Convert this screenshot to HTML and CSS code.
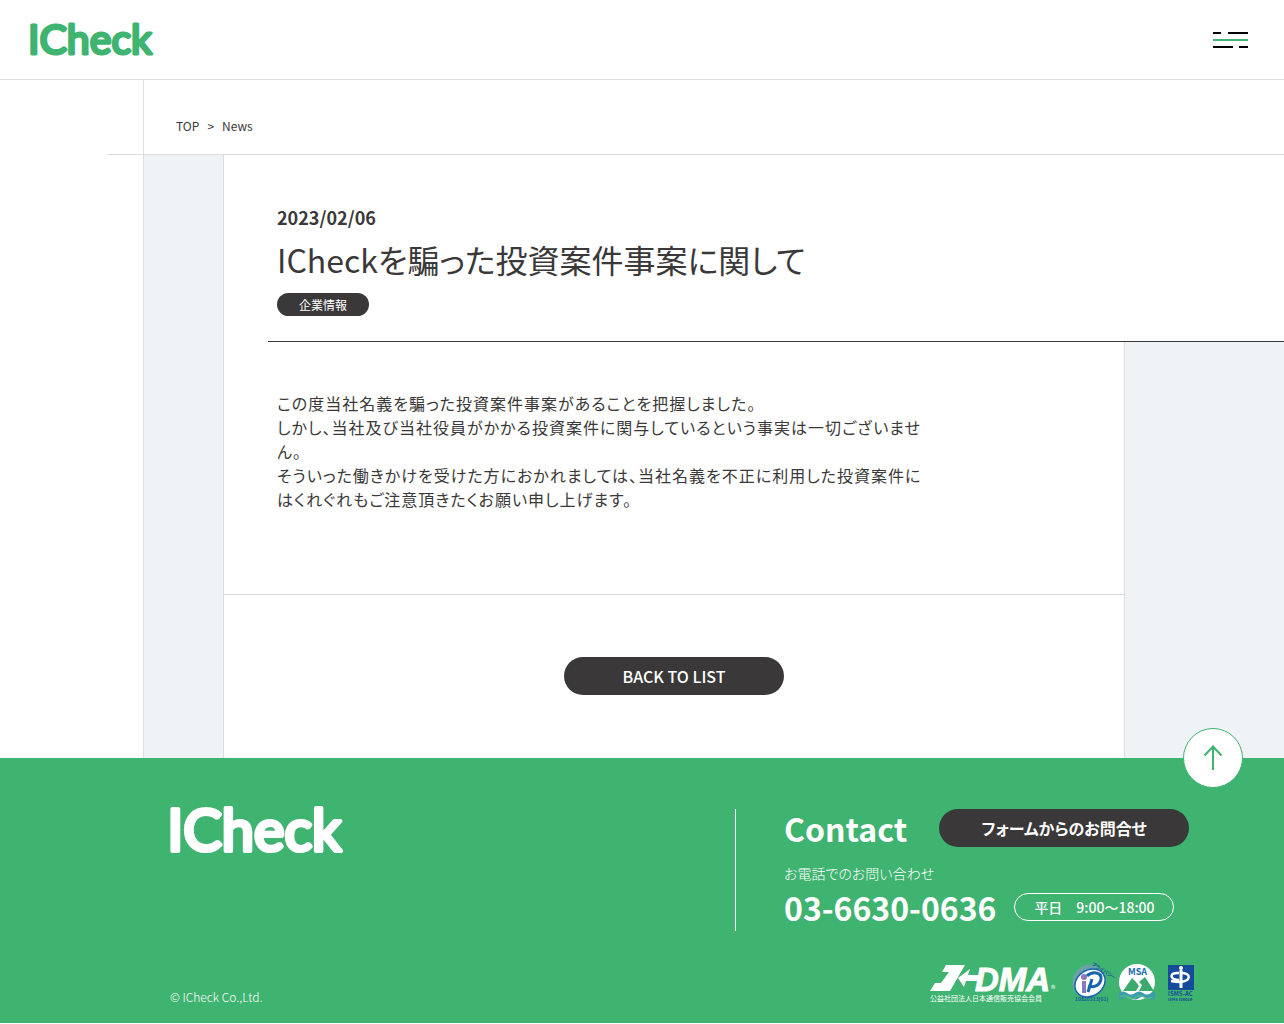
FILE: index.html
```html
<!DOCTYPE html>
<html lang="ja">
<head>
<meta charset="utf-8">
<meta name="viewport" content="width=device-width, initial-scale=1">
<title>ICheckを騙った投資案件事案に関して | ICheck</title>
<link rel="stylesheet" href="styles.css">
</head>
<body>
<header class="site-header">
  <a class="logo" href="#" aria-label="ICheck">
    <svg viewBox="0 0 128 34" aria-hidden="true"><text class="wordmark" x="-2" y="31">ICheck</text></svg>
  </a>
  <button class="menu-button" type="button" aria-label="メニュー">
    <svg viewBox="0 0 35 16" aria-hidden="true">
      <path d="M0 1h8M15 1h20M0 15h20M26 15h9" stroke="#000" stroke-width="2"/>
      <path d="M0 8h35" stroke="#3fb370" stroke-width="2"/>
    </svg>
  </button>
</header>

<main>
  <nav class="breadcrumb" aria-label="breadcrumb">
    <div class="breadcrumb-inner"><a href="#">TOP</a><span>&gt;</span><a href="#">News</a></div>
  </nav>
  <div class="backdrop">
    <article class="article">
      <header class="article-header">
        <div class="article-heading">
          <time class="date" datetime="2023-02-06">2023/02/06</time>
          <h1>ICheckを騙った投資案件事案に関して</h1>
          <span class="tag">企業情報</span>
        </div>
      </header>
      <div class="article-main">
        <div class="article-body">
          <p>この度当社名義を騙った投資案件事案があることを把握しました。<br>しかし、当社及び当社役員がかかる投資案件に関与しているという事実は一切ございません。<br>そういった働きかけを受けた方におかれましては、当社名義を不正に利用した投資案件にはくれぐれもご注意頂きたくお願い申し上げます。</p>
        </div>
        <div class="article-back"><a class="pill back" href="#">BACK TO LIST</a></div>
      </div>
    </article>
  </div>
</main>

<footer class="site-footer">
  <a class="page-top" href="#" aria-label="ページの先頭へ">
    <svg viewBox="0 0 20 26" aria-hidden="true"><path d="M10 25V2M1.500 10.500L10 1.500l8.500 9" fill="none" stroke="#3fb370" stroke-width="2"/></svg>
  </a>
  <div class="footer-top">
    <a class="footer-logo" href="#" aria-label="ICheck">
      <svg viewBox="0 0 128 34" aria-hidden="true"><text class="wordmark white" x="-2" y="30">ICheck</text></svg>
    </a>
    <section class="contact">
      <div class="contact-row">
        <h2>Contact</h2>
        <a class="pill form-link" href="#">フォームからのお問合せ</a>
      </div>
      <p class="phone-label">お電話でのお問い合わせ</p>
      <div class="phone-row">
        <a class="phone" href="tel:0366300636">03-6630-0636</a>
        <span class="hours">平日　9:00〜18:00</span>
      </div>
    </section>
  </div>
  <div class="footer-bottom">
    <small>© ICheck Co.,Ltd.</small>
    <div class="marks">
      <svg class="jadma" viewBox="0 0 130 42" role="img" aria-label="JADMA">
        <g fill="#fff">
          <path d="M18 4H37L22 30H2L7 22H13L21 11H14z"/>
          <path d="M30 17L42 8L40 14H53L50 20H38L36 26z"/>
          <text class="jadma-name" x="47" y="30">DMA</text>
          <text class="jadma-caption" x="2" y="40">公益社団法人日本通信販売協会会員</text>
          <text class="jadma-r" x="123" y="31">®</text>
        </g>
      </svg>
      <svg class="pmark" viewBox="0 0 38 42" role="img" aria-label="プライバシーマーク">
        <ellipse cx="16" cy="20" rx="15" ry="17" transform="rotate(35 16 20)" fill="#6aa3a7"/>
        <ellipse cx="18" cy="22" rx="16" ry="13" transform="rotate(-35 18 22)" fill="#fff" stroke="#1765ae" stroke-width="1.500"/>
        <circle cx="12" cy="16" r="3" fill="#8b78bd"/>
        <path d="M12 20v12" stroke="#8b78bd" stroke-width="4"/>
        <path d="M15 15C20 10 30 11 29 18C28 25 21 27 16 25M20 18l-4 13" fill="none" stroke="#1765ae" stroke-width="3"/>
        <text x="19" y="4" font-size="5" font-weight="700" fill="#155b9b" transform="rotate(32 19 4)">プライバシー</text>
        <text x="3" y="40" font-size="5" font-weight="700" fill="#155b9b">10820313(01)</text>
      </svg>
      <svg class="msa" viewBox="0 0 37 40" role="img" aria-label="MSA">
        <circle cx="19" cy="19" r="18" fill="#fff"/>
        <path d="M5 28L14 15l4 4 3 4-3 5zM21 28l3-6-3-3 6-5 9 14z" fill="#3aab6c"/>
        <path d="M1 30q4-3 8 0t8 0 8 0 8 0 4 0v5q-4 3-8 0t-8 0-8 0-8 0-4 0z" fill="#3c9caf"/>
        <path d="M2 34q4-3 8 0t8 0 8 0 8 0" fill="none" stroke="#4bbd84" stroke-width="1.500"/>
        <text x="10" y="12" font-size="9" font-weight="700" fill="#1a6daf">MSA</text>
      </svg>
      <svg class="isms" viewBox="0 0 27 40" role="img" aria-label="ISMS-AC">
        <path d="M1 2h26v25H1z" fill="#164b9b"/>
        <g fill="none" stroke="#fff"><path d="M14 7v18" stroke-width="3"/><path d="M12 10C2 9 2 17 12 17M14 10c11 0 10 8-1 9-6 0-8-1-9-1" stroke-width="2.500"/></g>
        <circle cx="14" cy="5" r="2" fill="#fff"/>
        <text x="1" y="33" font-size="6" font-weight="700" fill="#164b9b">ISMS-AC</text>
        <text x="1" y="38" font-size="4" font-weight="700" fill="#164b9b">ISMS ISR019</text>
      </svg>
    </div>
  </div>
</footer>
</body>
</html>
```
FILE: styles.css
```css
*, *::before, *::after { box-sizing: border-box; }

:root {
  --green: #3fb370;
  --ink: #3a3838;
  --line: #dcdfe1;
  --pale: #eff3f6;
}

body {
  margin: 0;
  background: #fff;
  color: var(--ink);
  font-family: "Noto Sans CJK JP", sans-serif;
  font-size: 16px;
  line-height: 24px;
  font-feature-settings: "palt";
}

a { color: inherit; text-decoration: none; }
svg { display: block; overflow: visible; }
h1, h2, p { margin: 0; }

.wordmark {
  font-family: Lato, sans-serif;
  font-size: 41px;
  font-weight: 400;
  fill: var(--green);
  stroke: var(--green);
  stroke-width: 3px;
  stroke-linejoin: round;
}
.wordmark.white { fill: #fff; stroke: #fff; }

.site-header {
  display: flex;
  align-items: center;
  justify-content: space-between;
  height: 80px;
  padding: 0 36px 0 30px;
  border-bottom: 1px solid var(--line);
}
.logo { width: 128px; }
.menu-button {
  width: 35px;
  padding: 0;
  border: 0;
  background: none;
  cursor: pointer;
}

.breadcrumb {
  margin-left: 107px;
  border-bottom: 1px solid var(--line);
}
.breadcrumb-inner {
  display: flex;
  gap: 8px;
  margin-left: 36px;
  padding: 34px 32px 16px;
  border-left: 1px solid var(--line);
  font-size: 12px;
}

.backdrop {
  margin-left: 143px;
  padding-left: 79px;
  border-left: 1px solid var(--line);
  background: var(--pale);
}
.article { border-left: 1px solid var(--line); }
.article-header { padding-left: 44px; background: #fff; }
.article-heading {
  display: flex;
  flex-direction: column;
  align-items: flex-start;
  padding: 50px 9px 25px;
  border-bottom: 1px solid var(--ink);
}
.date { font-size: 18px; font-weight: 700; }
h1 {
  margin: 6px 0 10px;
  font-size: 32px;
  font-weight: 400;
  line-height: 48px;
}
.tag {
  padding: 0 22px;
  border-radius: 12px;
  background: var(--ink);
  color: #fff;
  font-size: 12px;
  line-height: 23px;
}
.article-main {
  margin-right: 159px;
  border-right: 1px solid var(--line);
  background: #fff;
}
.article-body {
  padding: 49px 53px 83px;
  border-bottom: 1px solid var(--line);
}
.article-body p { max-width: 648px; letter-spacing: 1px; }
.article-back {
  display: flex;
  justify-content: center;
  padding: 62px 0 63px;
}
.pill {
  border-radius: 19px;
  background: var(--ink);
  color: #fff;
  line-height: 38px;
  text-align: center;
}
.back { width: 220px; font-weight: 500; }

.site-footer {
  position: relative;
  padding: 51px 90px 20px 170px;
  background: var(--green);
  color: #fff;
}
.page-top {
  position: absolute;
  top: -30px;
  right: 41px;
  display: grid;
  place-items: center;
  width: 60px;
  height: 60px;
  border: 1px solid var(--green);
  border-radius: 50%;
  background: #fff;
}
.page-top svg { width: 20px; }
.footer-top { display: flex; justify-content: space-between; }
.footer-logo { width: 180px; }
.contact {
  width: 459px;
  padding-left: 48px;
  border-left: 1px solid #fff;
}
.contact-row { display: flex; align-items: center; gap: 32px; }
h2, .phone { font-size: 32px; font-weight: 700; line-height: 38px; }
.form-link { width: 250px; font-weight: 700; }
.phone-label {
  margin: 14px 0 3px;
  font-size: 14px;
  font-weight: 300;
}
.phone-row { display: flex; align-items: center; gap: 18px; padding-bottom: 5px; }
.hours {
  width: 160px;
  border: 1px solid #fff;
  border-radius: 14px;
  font-size: 14px;
  font-weight: 500;
  line-height: 26px;
  text-align: center;
}
.footer-bottom {
  display: flex;
  align-items: flex-end;
  justify-content: space-between;
  margin-top: 30px;
}
small { font-size: 12px; font-weight: 300; line-height: 12px; font-feature-settings: normal; }
.marks { display: flex; align-items: flex-end; }
.jadma { width: 130px; }
.pmark { width: 38px; margin-left: 14px; }
.msa { width: 37px; margin-left: 8px; }
.isms { width: 27px; margin-left: 12px; }
.jadma-name { font-family: "Liberation Sans", sans-serif; font-size: 33px; font-weight: 700; font-style: italic; stroke: #fff; stroke-width: 1px; }
.jadma-caption { font-size: 7px; }
.jadma-r { font-size: 9px; }
```
